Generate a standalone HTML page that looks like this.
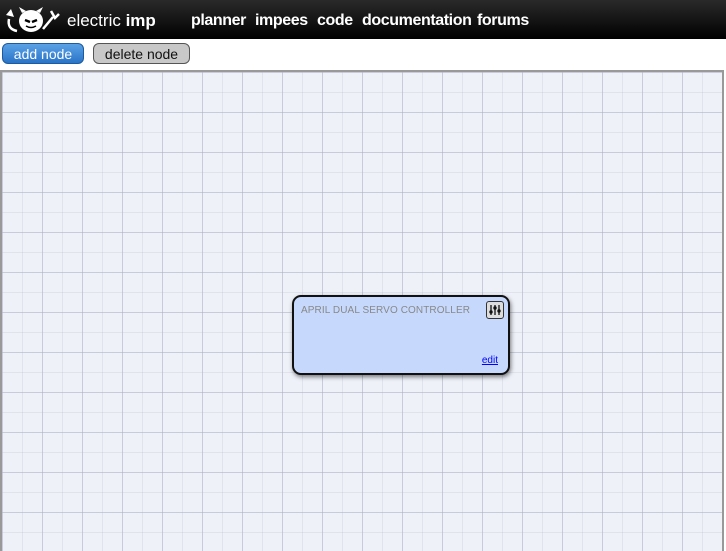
<!DOCTYPE html>
<html><head><style>
body{margin:0;width:726px;height:551px;overflow:hidden;font-family:"Liberation Sans",sans-serif;background:#fff;position:relative}
.hdr{position:absolute;left:0;top:0;width:726px;height:39px;background:linear-gradient(#2a2a2a,#000)}
.nav span{position:absolute;top:12px;color:#fff;font-weight:bold;font-size:16px;letter-spacing:-0.4px}
.logo{position:absolute;left:67px;top:11px;color:#fff;font-size:17px}
.btn{position:absolute;top:43px;height:21px;border-radius:6px;font-size:14px;line-height:21px;text-align:center;box-sizing:border-box}
.add{left:2px;width:82px;background:linear-gradient(#5aa2e6,#2a74c8);color:#fff;border:1px solid #1d5aa0}
.del{left:93px;width:97px;background:#c8c8c8;color:#111;border:1px solid #555}
.canvas{position:absolute;left:0;top:70px;width:724px;height:481px;border:1px solid #999;border-width:2px 2px 0 2px;box-sizing:border-box;background-color:#eef1f8;
background-image:linear-gradient(90deg,rgba(170,175,190,.45) 1px,transparent 1px),linear-gradient(rgba(170,175,190,.45) 1px,transparent 1px),linear-gradient(90deg,rgba(190,195,210,.3) 1px,transparent 1px),linear-gradient(rgba(190,195,210,.3) 1px,transparent 1px);
background-size:40px 40px,40px 40px,20px 20px,20px 20px;background-position:40px 40px,40px 40px,0 0,0 0}
.node{position:absolute;left:292px;top:295px;width:218px;height:80px;box-sizing:border-box;border:2px solid #111;border-radius:9px;background:#c6d9fc;box-shadow:1px 2px 4px rgba(0,0,0,.5)}
.t{position:absolute;left:7px;top:8px;font-size:10px;color:#888;letter-spacing:.1px}
.e{position:absolute;right:10px;bottom:7px;font-size:10px;color:#00f;text-decoration:underline}
.ic{position:absolute;right:4px;top:4px;width:16px;height:16px;border:1px solid #333;border-radius:3px;background:#ddd}
</style></head><body>
<div class="hdr">
<svg style="position:absolute;left:5px;top:5px" width="60" height="30" viewBox="0 0 60 30"><path d="M4 14 Q2 24 12 26" stroke="#fff" stroke-width="2.5" fill="none"/><path d="M1 10 L6 4 L9 12Z" fill="#fff"/><ellipse cx="26" cy="16" rx="12" ry="11" fill="#fff"/><path d="M17 8 L14 2 L21 6Z M35 8 L38 2 L31 6Z" fill="#fff"/><path d="M20 15 L25 17 M32 15 L27 17" stroke="#000" stroke-width="2.5"/><path d="M21 21 Q26 24 31 21" stroke="#000" stroke-width="1.5" fill="none"/><path d="M38 24 L48 12 M46 6 L50 13 L54 9" stroke="#fff" stroke-width="2.5" fill="none"/></svg>
<div class="logo">electric <b>imp</b></div>
<div class="nav"><span style="left:191px">planner</span><span style="left:255px">impees</span><span style="left:317px">code</span><span style="left:362px">documentation</span><span style="left:477px">forums</span></div>
</div>
<div class="btn add">add node</div>
<div class="btn del">delete node</div>
<div class="canvas"></div>
<div class="node"><div class="t">APRIL DUAL SERVO CONTROLLER</div>
<div class="ic"><svg width="16" height="16"><path d="M4 3V13M8 3V13M12 3V13" stroke="#111" stroke-width="1.3"/><circle cx="4" cy="10" r="1.7" fill="#111"/><circle cx="8" cy="6" r="1.7" fill="#111"/><circle cx="12" cy="9" r="1.7" fill="#111"/></svg></div>
<div class="e">edit</div></div>
</body></html>
